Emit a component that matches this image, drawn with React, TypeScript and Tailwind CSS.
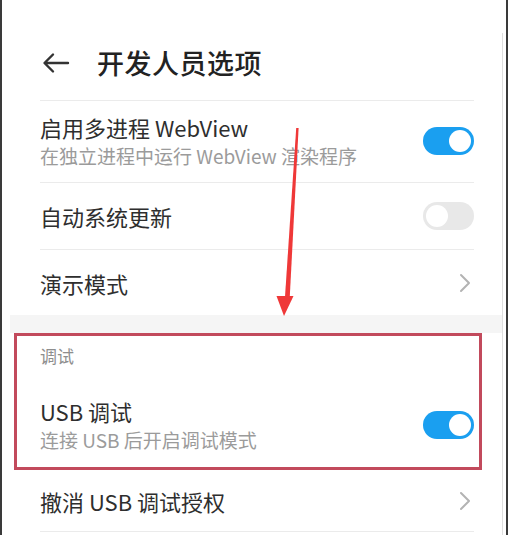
import type { ReactNode } from "react";

const Toggle = ({ on }: { on: boolean }) => (
  <div
    className={
      on
        ? "w-[51px] h-[28px] rounded-full bg-[#1a9ff0] flex items-center justify-end pr-[3px] shrink-0"
        : "w-[51px] h-[28px] rounded-full bg-[#e8e8e8] flex items-center justify-start pl-[3px] shrink-0"
    }
  >
    <div className="w-[22px] h-[22px] rounded-full bg-white" />
  </div>
);

const Chevron = () => (
  <svg width="14" height="20" viewBox="0 0 14 20" className="shrink-0 mr-[2px]">
    <path d="M3 2 L11 10 L3 18" fill="none" stroke="#b3b3b3" strokeWidth="2" strokeLinecap="round" strokeLinejoin="round" />
  </svg>
);

const Divider = () => <div className="h-px bg-[#ebebeb]" />;

const Row = ({
  title,
  sub,
  right,
  className,
}: {
  title: string;
  sub?: string;
  right: ReactNode;
  className: string;
}) => (
  <div className={"flex items-center justify-between " + className}>
    <div className="flex flex-col gap-[3px]">
      <p className="text-[22px] leading-[28px] text-[#2e2e2e]">{title}</p>
      {sub && <p className="text-[19px] leading-[24px] text-[#9b9b9b]">{sub}</p>}
    </div>
    {right}
  </div>
);

export default function App() {
  return (
    <div
      className="relative w-[508px] h-[535px] overflow-hidden bg-white border-x-2 border-[#3a3a3a]"
      style={{ fontFamily: '"Noto Sans CJK SC", "Noto Sans", sans-serif' }}
    >
      <div className="mt-[33px] w-[501px] h-[502px] border-r border-[#dedede]">
        <header className="h-[67px] flex items-center pl-[40px] pb-[7px]">
          <svg width="28" height="22" viewBox="0 0 28 22" className="shrink-0">
            <path d="M26 11 H3 M11 2.5 L2.5 11 L11 19.5" fill="none" stroke="#333" strokeWidth="2.4" strokeLinecap="round" strokeLinejoin="round" />
          </svg>
          <h1 className="ml-[27px] text-[27px] leading-[34px] font-medium text-[#222] tracking-[0.5px]">开发人员选项</h1>
        </header>

        <div className="ml-[38px] mr-[28px]">
          <Divider />
          <Row
            className="h-[81px] pb-[2px]"
            title="启用多进程 WebView"
            sub="在独立进程中运行 WebView 渲染程序"
            right={<Toggle on />}
          />
          <Divider />
          <Row className="h-[66px]" title="自动系统更新" right={<Toggle on={false} />} />
          <Divider />
          <Row className="h-[65px]" title="演示模式" right={<Chevron />} />
        </div>

        <div className="ml-[8px] h-[18px] bg-[#f5f5f5]" />

        <div className="ml-[12px] w-[468px] border-[3px] border-[#c24a5c] pl-[23px] pr-[5px]">
          <div className="h-[39px] flex items-center">
            <p className="text-[17px] leading-[22px] text-[#8e8e8e]">调试</p>
          </div>
          <Row
            className="pt-[22px] pb-[15px]"
            title="USB 调试"
            sub="连接 USB 后开启调试模式"
            right={<Toggle on />}
          />
        </div>

        <div className="ml-[38px] mr-[28px]">
          <Row className="h-[61px]" title="撤消 USB 调试授权" right={<Chevron />} />
          <Divider />
        </div>
      </div>

      <svg width="508" height="535" className="absolute left-[-2px] top-0 pointer-events-none">
        <polygon points="296.2,128 298.6,128 289.6,300 284.8,300" fill="#ef3838" />
        <polygon points="276.5,296 293.5,296 284,316" fill="#ef3838" />
      </svg>
    </div>
  );
}
